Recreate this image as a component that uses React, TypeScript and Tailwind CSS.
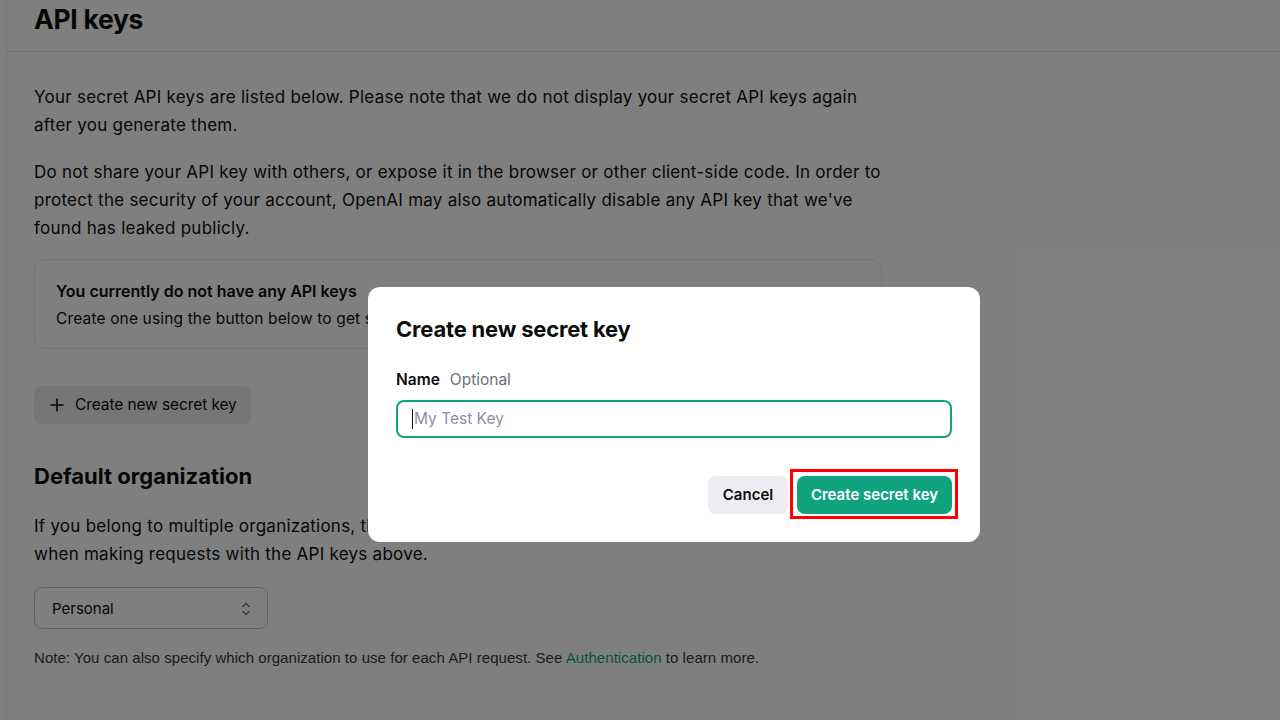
import React from "react";

export default function App() {
  return (
    <div
      className="relative w-[1280px] h-[720px] overflow-hidden bg-white text-[#0d0d0d]"
      style={{ fontFamily: "Inter, 'Noto Sans', sans-serif" }}
    >
      {/* Page */}
      <div className="ml-[6px] h-full border-l border-[#ececf1]">
        <div className="h-[52px] border-b border-[#e5e5e5] pl-[27px] pt-[2px]">
          <h1 className="text-[26.5px] font-bold leading-[34px] tracking-[-0.3px]">API keys</h1>
        </div>
        <div className="pl-[27px] w-[875px]">
          <p className="mt-[31px] text-[17px] leading-[28px] tracking-[0.25px]">
            Your secret API keys are listed below. Please note that we do not display your secret API keys again after you generate them.
          </p>
          <p className="mt-[19px] text-[17px] leading-[28px] tracking-[0.25px]">
            Do not share your API key with others, or expose it in the browser or other client-side code. In order to protect the security of your account, OpenAI may also automatically disable any API key that we've found has leaked publicly.
          </p>
          <div className="mt-[17px] h-[90px] rounded-[10px] border border-[#ececf1] px-[21px] pt-[19px]">
            <div className="text-[16px] font-semibold leading-[24px]">You currently do not have any API keys</div>
            <div className="mt-[4px] text-[15.5px] leading-[24px] tracking-[0.15px]">Create one using the button below to get started</div>
          </div>
          <button className="mt-[37px] flex h-[38px] w-[217px] items-center gap-[11px] rounded-lg bg-[#ececec] pl-[16px] text-[15.5px] tracking-[-0.1px]">
            <svg width="14" height="14" viewBox="0 0 14 14" fill="none" stroke="#0d0d0d" strokeWidth="1.6">
              <path d="M7 0.5v13M0.5 7h13" />
            </svg>
            <span>Create new secret key</span>
          </button>
          <h2 className="mt-[37px] text-[22px] font-bold leading-[30px]">Default organization</h2>
          <p className="mt-[21px] text-[17px] leading-[28px] tracking-[0.25px]">
            If you belong to multiple organizations, this setting controls which organization is used by default when making requests with the API keys above.
          </p>
          <div className="mt-[19px] flex h-[42px] w-[234px] items-center justify-between rounded-lg border border-[#c5c5d2] pl-[17px] pr-[16px] pt-[2px] text-[15px]">
            <span>Personal</span>
            <svg width="10" height="16" viewBox="0 0 10 16" fill="none" stroke="#6e6e80" strokeWidth="1.3">
              <path d="M1.5 6L5 2.5 8.5 6M1.5 10L5 13.5 8.5 10" />
            </svg>
          </div>
          <p
            className="mt-[19px] text-[15px] leading-[20px] text-[#353740] tracking-[0.05px]"
            style={{ fontFamily: "'Liberation Sans', Arial, sans-serif" }}
          >
            Note: You can also specify which organization to use for each API request. See{" "}
            <span className="text-[#10a37f]">Authentication</span> to learn more.
          </p>
        </div>
      </div>

      {/* Overlay */}
      <div className="absolute inset-0 bg-black/50" />

      {/* Modal */}
      <div className="absolute left-[368px] top-[287px] w-[612px] h-[255px] rounded-[12px] bg-white px-[28px] pt-[28px]">
        <h3 className="text-[22px] font-bold leading-[28px] tracking-[-0.2px]">Create new secret key</h3>
        <div className="mt-[27px] flex items-center gap-[10px] text-[15.5px] leading-[20px]">
          <span className="font-semibold">Name</span>
          <span className="text-[#6e6e80]">Optional</span>
        </div>
        <div className="mt-[10px] flex h-[38px] items-center rounded-lg border-2 border-[#10a37f] pl-[14px] text-[15.5px] text-[#8e8ea0]">
          <span className="mr-[1px] inline-block h-[20px] w-px bg-[#0d0d0d]" />
          <span>My Test Key</span>
        </div>
        <div className="mt-[38px] flex justify-end gap-[9px]">
          <button className="h-[38px] w-[80px] rounded-lg bg-[#ececf1] text-[15px] font-semibold">Cancel</button>
          <div className="relative">
            <button className="h-[38px] w-[155px] rounded-lg bg-[#10a37f] text-[15px] font-semibold text-white">
              Create secret key
            </button>
            <div className="absolute -left-[7px] -top-[7px] h-[50px] w-[168px] border-[3px] border-[#ff0000]" />
          </div>
        </div>
      </div>
    </div>
  );
}
